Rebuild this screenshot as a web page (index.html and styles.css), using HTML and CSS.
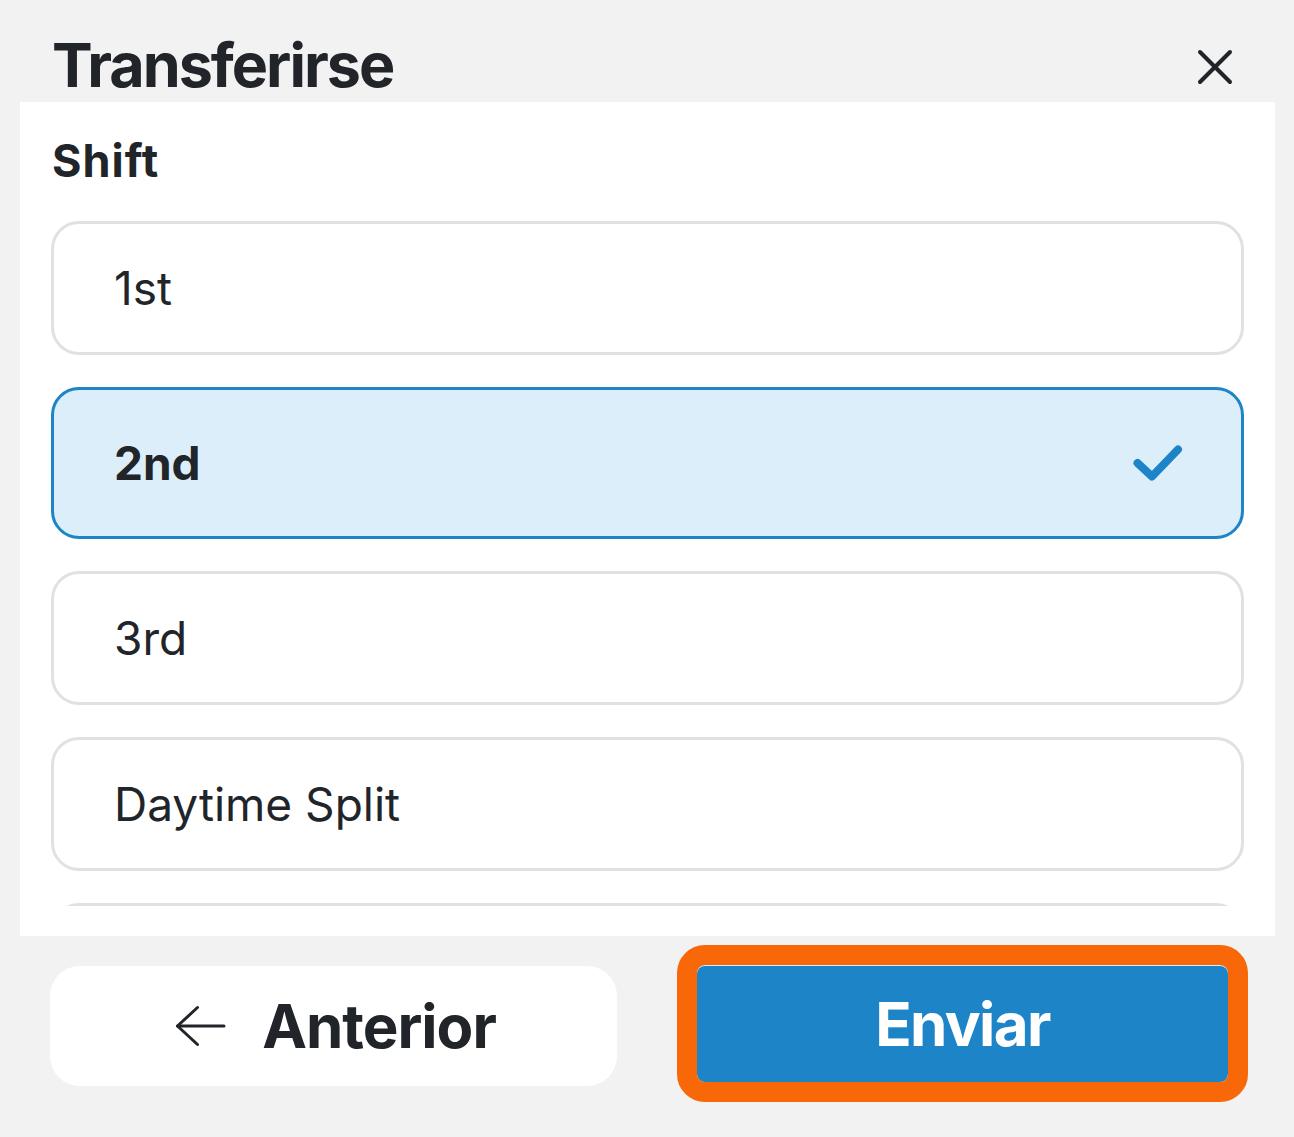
FILE: index.html
```html
<!DOCTYPE html>
<html lang="es">
<head>
<meta charset="utf-8">
<title>Transferirse</title>
<link rel="stylesheet" href="styles.css">
</head>
<body>
<div class="page">
  <header class="header">
    <h1 class="title">Transferirse</h1>
    <button class="close" aria-label="Cerrar">
      <svg width="38" height="38" viewBox="0 0 38 38" fill="none" stroke="#212529" stroke-width="4" stroke-linecap="round">
        <line x1="4" y1="4" x2="34" y2="34"/>
        <line x1="34" y1="4" x2="4" y2="34"/>
      </svg>
    </button>
  </header>
  <section class="panel">
    <div class="label">Shift</div>
    <div class="list">
      <div class="option">1st</div>
      <div class="option selected">
        <span>2nd</span>
        <svg class="check" width="56" height="44" viewBox="0 0 56 44" fill="none" stroke="#1e84c8" stroke-width="8" stroke-linecap="round" stroke-linejoin="round">
          <polyline points="7.5,22 22,35.5 48,8.5"/>
        </svg>
      </div>
      <div class="option">3rd</div>
      <div class="option">Daytime Split</div>
      <div class="option">Nighttime Split</div>
    </div>
  </section>
  <footer class="footer">
    <button class="btn btn-back">
      <svg width="52" height="44" viewBox="0 0 52 44" fill="none" stroke="#212529" stroke-width="3" stroke-linecap="round" stroke-linejoin="round">
        <line x1="2.5" y1="22" x2="49" y2="22"/>
        <polyline points="22.5,3.5 2.5,22 22.5,40.5"/>
      </svg>
      <span>Anterior</span>
    </button>
    <button class="btn btn-submit">Enviar</button>
  </footer>
</div>
</body>
</html>
```
FILE: styles.css
```css
* { box-sizing: border-box; }
html, body {
  margin: 0;
  padding: 0;
  background: #f2f2f2;
}
body {
  font-family: Inter, "Noto Sans", sans-serif;
  color: #212529;
}
.page {
  width: 1294px;
  height: 1137px;
  overflow: hidden;
}
.header {
  height: 102px;
  display: flex;
  justify-content: space-between;
  align-items: flex-start;
  padding: 0 60px 0 52px;
}
.title {
  margin: 35px 0 0;
  font-size: 61px;
  line-height: 61px;
  font-weight: 700;
  letter-spacing: -2px;
}
.close {
  margin-top: 48px;
  padding: 0;
  border: 0;
  background: none;
  width: 38px;
  height: 38px;
  display: block;
}
.close svg { display: block; }
.panel {
  margin: 0 19px 0 20px;
  height: 834px;
  background: #fff;
  padding: 36px 31px 30px 31px;
  display: flex;
  flex-direction: column;
}
.label {
  font-size: 45px;
  line-height: 45px;
  font-weight: 700;
  letter-spacing: 1px;
  padding-left: 1px;
  margin-bottom: 38px;
}
.list {
  height: 685px;
  overflow: hidden;
  display: flex;
  flex-direction: column;
  gap: 32px;
}
.option {
  flex: none;
  height: 134px;
  border: 3px solid #e1e1e1;
  border-radius: 28px;
  background: #fff;
  display: flex;
  align-items: center;
  justify-content: space-between;
  padding: 0 55px 0 60px;
  font-size: 46px;
  line-height: 46px;
  font-weight: 400;
}
.option.selected {
  height: 152px;
  border-color: #1e84c8;
  background: #dceefa;
  font-weight: 700;
}
.check { display: block; }
.footer {
  display: flex;
  align-items: flex-start;
  padding: 30px 0 0 50px;
}
.btn {
  font-family: Inter, "Noto Sans", sans-serif;
  font-size: 60px;
  line-height: 60px;
  font-weight: 700;
  border: 0;
  padding: 0;
  display: flex;
  align-items: center;
  justify-content: center;
  cursor: pointer;
}
.btn-back {
  width: 567px;
  height: 120px;
  border-radius: 30px;
  background: #fff;
  color: #212529;
  gap: 35px;
  padding-left: 4px;
  letter-spacing: -1px;
}
.btn-back svg { display: block; }
.btn-submit {
  margin-left: 80px;
  margin-top: -1px;
  width: 531px;
  height: 117px;
  border-radius: 8px;
  background: #1e84c8;
  color: #fff;
  letter-spacing: -1.6px;
  outline: 20px solid #f86808;
  box-shadow: inset 0 1px 0 rgba(255,255,255,0.85);
}
```
